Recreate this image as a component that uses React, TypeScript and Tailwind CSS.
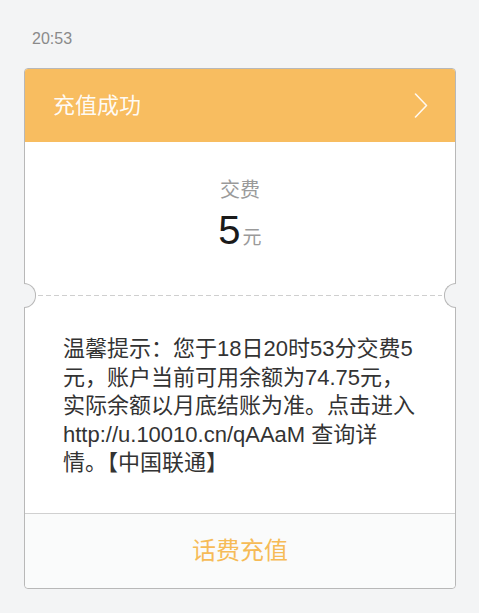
const FONT = "font-['Liberation_Sans','Noto_Sans_CJK_SC',sans-serif]";

const MESSAGE_LINES = [
  '温馨提示：您于18日20时53分交费5',
  '元，账户当前可用余额为74.75元，',
  '实际余额以月底结账为准。点击进入',
  'http://u.10010.cn/qAAaM 查询详',
  '情。【中国联通】',
];

export default function App() {
  return (
    <div className={`${FONT} min-h-screen bg-[#f3f4f5] pt-[29px] pl-6 pr-[23px]`}>
      {/* 时间 */}
      <div className="pl-2 text-[16px] leading-5 text-[#8a8a8a]">20:53</div>

      {/* 卡片 */}
      <div className="relative mt-[19px] rounded-[4px] border border-[#b8b8b8] bg-white">
        <div className="flex h-[73px] items-center justify-between rounded-t-[3px] bg-[#f8bd60] pl-7 pr-[27px]">
          <span className="text-[22px] text-white/95">充值成功</span>
          <svg width="14" height="25" viewBox="0 0 14 25" fill="none" className="text-white/90">
            <polyline points="1.5,1 12.5,12.5 1.5,24" stroke="currentColor" strokeWidth="1.6" strokeLinecap="round" strokeLinejoin="round" />
          </svg>
        </div>

        <div className="flex h-[153px] flex-col items-center pt-[34px]">
          <div className="text-[20px] leading-7 text-[#9a9a9a]">交费</div>
          <div className="mt-[6px] flex items-baseline leading-none">
            <span className="text-[40px] text-[#1a1a1a]">5</span>
            <span className="ml-[2px] text-[19px] text-[#9a9a9a]">元</span>
          </div>
        </div>

        {/* 虚线和缺口 */}
        <div className="relative h-px">
          <div className="mx-[13px] h-px bg-[repeating-linear-gradient(to_right,#cfcfcf_0_5px,transparent_5px_8px)]" />
          <div className="absolute -left-px top-[-12px] h-[25px] w-[12px] rounded-r-full border border-l-0 border-[#b8b8b8] bg-[#f3f4f5]" />
          <div className="absolute -right-px top-[-12px] h-[25px] w-[12px] rounded-l-full border border-r-0 border-[#b8b8b8] bg-[#f3f4f5]" />
        </div>

        <div className="px-[38px] pt-[39px] pb-[35px] text-[22px] leading-[28.5px] text-[#333]">
          {MESSAGE_LINES.map((line) => (
            <div key={line} className="whitespace-nowrap">{line}</div>
          ))}
        </div>

        <div className="flex h-[75px] items-center justify-center rounded-b-[4px] border-t border-[#d0d0d0] bg-[#fafbfb]">
          <span className="text-[24px] text-[#f6bb57]">话费充值</span>
        </div>
      </div>
    </div>
  );
}
